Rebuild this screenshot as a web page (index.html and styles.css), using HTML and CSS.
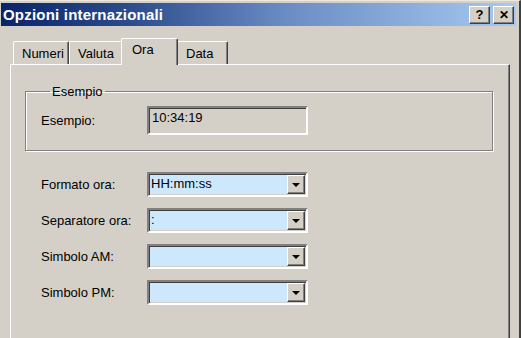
FILE: index.html
```html
<!doctype html>
<html lang="it">
<head>
    <meta charset="utf-8">
    <title>Opzioni internazionali</title>
    <link rel="stylesheet" href="styles.css">
</head>
<body>
    <div class="window">
        <div class="titlebar">
            <span class="title">Opzioni internazionali</span>
            <div class="caption-buttons">
                <span class="cap-btn">?</span>
                <span class="cap-btn close">&#x2715;</span>
            </div>
        </div>

        <div class="tabs">
            <span class="tab">Numeri</span>
            <span class="tab">Valuta</span>
            <span class="tab selected">Ora</span>
            <span class="tab">Data</span>
        </div>

        <div class="panel">
            <fieldset class="group">
                <legend>Esempio</legend>
                <div class="row">
                    <span class="label">Esempio:</span>
                    <div class="sample">10:34:19</div>
                </div>
            </fieldset>

            <div class="fields">
                <div class="row">
                    <span class="label">Formato ora:</span>
                    <div class="combo"><span class="value">HH:mm:ss</span><span class="arrow"></span></div>
                </div>
                <div class="row">
                    <span class="label">Separatore ora:</span>
                    <div class="combo"><span class="value">:</span><span class="arrow"></span></div>
                </div>
                <div class="row">
                    <span class="label">Simbolo AM:</span>
                    <div class="combo"><span class="value"></span><span class="arrow"></span></div>
                </div>
                <div class="row">
                    <span class="label">Simbolo PM:</span>
                    <div class="combo"><span class="value"></span><span class="arrow"></span></div>
                </div>
            </div>
        </div>
    </div>
</body>
</html>
```

FILE: styles.css
```css
html, body {
    margin: 0;
    height: 100%;
    overflow: hidden;
    background: #d4d0c8;
}

body {
    font-family: "Liberation Sans", Arial, sans-serif;
    font-size: 13px;
    color: #000;
}

.window {
    width: 521px;
    height: 338px;
    box-sizing: border-box;
    padding: 2px 3px 0 1px;
    border-top: 1px solid #ece9e0;
    border-right: 2px solid #404040;
}

/* title bar */
.titlebar {
    height: 23px;
    display: flex;
    align-items: center;
    justify-content: space-between;
    padding: 0 2px 0 2px;
    background: linear-gradient(to right, #0a246a, #2c4c8c 25%, #6a8cc4 55%, #a6caf0);
}

.title {
    color: #fff;
    font-weight: bold;
    font-size: 15px;
    letter-spacing: 0.2px;
}

.caption-buttons {
    display: flex;
    gap: 3px;
}

.cap-btn {
    width: 19px;
    height: 16px;
    display: flex;
    align-items: center;
    justify-content: center;
    background: #d4d0c8;
    border-top: 1px solid #fff;
    border-left: 1px solid #fff;
    border-right: 1px solid #404040;
    border-bottom: 1px solid #404040;
    box-shadow: inset -1px -1px 0 #808080;
    font-weight: bold;
    font-size: 13px;
    line-height: 1;
}

.cap-btn.close {
    font-size: 12px;
}

/* tabs */
.tabs {
    display: flex;
    align-items: flex-end;
    margin: 12px 0 0 9px;
    height: 26px;
}

.tab {
    height: 23px;
    box-sizing: border-box;
    padding: 4px 8px 0 8px;
    border-top: 1px solid #fff;
    border-left: 1px solid #fff;
    border-right: 1px solid #404040;
    border-radius: 2px 2px 0 0;
    box-shadow: inset -1px 0 0 #808080;
}

.tab:first-child {
    margin-left: 3px;
    width: 56px;
}

.tab:nth-child(2) {
    width: 54px;
}

.tab:last-child {
    width: 51px;
}

.tab.selected {
    height: 27px;
    width: 57px;
    margin: 0 -1px -1px -2px;
    padding-top: 3px;
    padding-left: 10px;
    background: #d4d0c8;
    position: relative;
}

/* page */
.panel {
    margin-left: 9px;
    width: 500px;
    height: 290px;
    box-sizing: border-box;
    padding: 19px 0 0 14px;
    border-top: 1px solid #fff;
    border-left: 1px solid #fff;
    border-right: 1px solid #404040;
    box-shadow: inset -1px 0 0 #808080;
}

.group {
    margin: 0;
    width: 468px;
    box-sizing: border-box;
    padding: 7px 15px 15px 15px;
    border: 1px solid #808080;
    box-shadow: inset 1px 1px 0 #fff, 1px 1px 0 #fff;
}

.group legend {
    margin-left: 9px;
    padding: 0 2px;
    line-height: 15px;
}

.row {
    display: flex;
    align-items: center;
}

.label {
    width: 106px;
    flex: none;
}

.sample {
    width: 161px;
    height: 29px;
    box-sizing: border-box;
    padding: 2px 0 0 3px;
    border-top: 2px solid #808080;
    border-left: 2px solid #808080;
    border-right: 2px solid #fff;
    border-bottom: 2px solid #fff;
    box-shadow: inset 1px 1px 0 #404040;
}

.fields {
    display: flex;
    flex-direction: column;
    gap: 11px;
    margin: 21px 0 0 16px;
}

.combo {
    width: 161px;
    height: 25px;
    box-sizing: border-box;
    display: flex;
    align-items: stretch;
    background: #cde8fc;
    border-top: 2px solid #808080;
    border-left: 2px solid #808080;
    border-right: 2px solid #fff;
    border-bottom: 2px solid #fff;
    box-shadow: inset 1px 1px 0 #404040, inset -1px -1px 0 #d4d0c8;
}

.combo .value {
    flex: 1;
    padding-left: 2px;
    line-height: 20px;
}

.arrow {
    width: 16px;
    margin: 1px 1px 1px 0;
    display: flex;
    align-items: center;
    justify-content: center;
    background: #d4d0c8;
    border-top: 1px solid #fff;
    border-left: 1px solid #fff;
    border-right: 1px solid #404040;
    border-bottom: 1px solid #404040;
    box-shadow: inset -1px -1px 0 #808080;
}

.arrow::after {
    content: "";
    width: 0;
    height: 0;
    border-left: 4px solid transparent;
    border-right: 4px solid transparent;
    border-top: 4px solid #000;
    margin-top: 1px;
}
```
